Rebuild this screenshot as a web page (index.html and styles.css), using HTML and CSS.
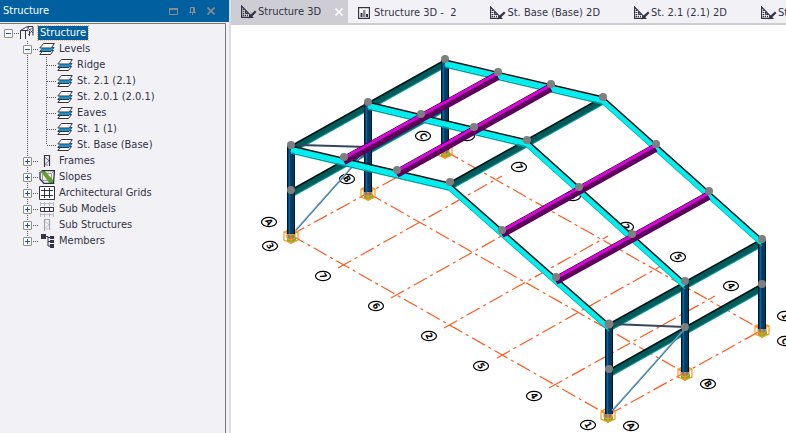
FILE: index.html
```html
<!DOCTYPE html>
<html lang="en">
<head>
<meta charset="utf-8">
<title>Structure 3D</title>
<link rel="stylesheet" href="styles.css">
</head>
<body>
<svg class="defs" aria-hidden="true">
  <defs>
    <symbol id="i-level" viewBox="0 0 16 12">
      <path d="M4 7.500h10.500l-3 4H.8z" fill="#fff" stroke="#333346"/>
      <path d="M4 4.500h11l-3 4H.8z" fill="#1c93cf" stroke="#333346"/>
      <path d="M4.500 .5h10.800l-3 4.500H.8z" fill="#fff" stroke="#333346"/>
      <path d="M2 6.800h10l2-2" fill="none" stroke="#1c93cf" stroke-width="2"/>
    </symbol>
    <symbol id="i-frame" viewBox="0 0 8 12"><path d="M1.500 12V.5h5V11" fill="none" stroke="currentColor" stroke-width="1.200"/><path d="M1.500 2l5 4M6.500 5l-5 5M3 10h2" fill="none" stroke="currentColor" stroke-opacity=".65"/></symbol>
    <symbol id="i-2d" viewBox="0 0 16 14">
      <path d="M.6 1v11.400h11L.6 1z" fill="none" stroke="#333346" stroke-width="1.200"/>
      <path d="M2.500 4v7M2 10.500h7" stroke="#333346" stroke-width="1.500" stroke-dasharray="1 1"/>
      <path d="M4.500 6v2.500h2.500z" fill="none" stroke="#333346"/>
      <path d="M7.500 13.500l1-3 5.500-5 1.500 1.500-5.500 5.500z" fill="#333346"/>
    </symbol>
    <symbol id="i-close" viewBox="0 0 8 8"><path d="M.5.5l7 7M7.500.5l-7 7" fill="none" stroke="currentColor" stroke-width="1.700"/></symbol>
  </defs>
</svg>
<div class="app">
  <aside class="panel">
    <header class="panel-head">
      <h1>Structure</h1>
      <button type="button" aria-label="Maximise"><svg width="9" height="7"><path d="M.5 1v5.500h8V1" fill="none" stroke="currentColor"/><path d="M0 1h9" stroke="currentColor" stroke-width="2"/></svg></button>
      <button type="button" aria-label="Pin"><svg width="7" height="8"><path d="M1.500 5V.5h4V5M0 5.500h7M3.500 5v3M4.500 1v4" fill="none" stroke="currentColor"/></svg></button>
      <button type="button" aria-label="Close"><svg width="8" height="8"><use href="#i-close"/></svg></button>
    </header>
    <nav class="tree" aria-label="Structure">
      <div class="row root">
        <button type="button" class="toggle open" aria-label="Collapse Structure"></button><i class="dots"></i>
        <svg class="icon-root" width="14" height="14"><path d="M.5 13V4.500l5-3M5.500 4.500V13M.5 4.500h7M5.500 1.500l2-1h5.500v9M9.500 5v5" fill="none" stroke="#333346"/><path d="M7 1l6 6M13 2L7 5M8 9l5-5M7 4l2-3" fill="none" stroke="#333346" stroke-opacity=".7"/></svg>
        <a class="label selected" href="#structure">Structure</a>
      </div>
      <ul class="branch">
        <li>
          <div class="row"><button type="button" class="toggle open" aria-label="Collapse Levels"></button><i class="dots"></i><span class="icon"><svg width="16" height="12"><use href="#i-level"/></svg></span><a class="label" href="#levels">Levels</a></div>
          <ul class="leaves">
            <li class="row"><i class="dots"></i><span class="icon"><svg width="16" height="12"><use href="#i-level"/></svg></span><a class="label" href="#ridge">Ridge</a></li>
            <li class="row"><i class="dots"></i><span class="icon"><svg width="16" height="12"><use href="#i-level"/></svg></span><a class="label" href="#l21">St. 2.1 (2.1)</a></li>
            <li class="row"><i class="dots"></i><span class="icon"><svg width="16" height="12"><use href="#i-level"/></svg></span><a class="label" href="#l201">St. 2.0.1 (2.0.1)</a></li>
            <li class="row"><i class="dots"></i><span class="icon"><svg width="16" height="12"><use href="#i-level"/></svg></span><a class="label" href="#eaves">Eaves</a></li>
            <li class="row"><i class="dots"></i><span class="icon"><svg width="16" height="12"><use href="#i-level"/></svg></span><a class="label" href="#l1">St. 1 (1)</a></li>
            <li class="row"><i class="dots"></i><span class="icon"><svg width="16" height="12"><use href="#i-level"/></svg></span><a class="label" href="#base">St. Base (Base)</a></li>
          </ul>
        </li>
        <li class="row"><button type="button" class="toggle" aria-label="Expand Frames"></button><i class="dots"></i><span class="icon"><svg width="8" height="12"><use href="#i-frame"/></svg></span><a class="label" href="#frames">Frames</a></li>
        <li class="row"><button type="button" class="toggle" aria-label="Expand Slopes"></button><i class="dots"></i><span class="icon"><svg width="16" height="14"><path d="M3.500 3.500h9v7h-9zM.5.5l3 3M15.500.5l-3 3M15.500 13.500l-3-3" fill="none" stroke="#999"/><path d="M1.500 1l4-.5 9 10-.5 3-3 .5z" fill="#5fa02e"/><path d="M2.500.5h13L14.500 13.500H5L1 9V2" fill="none" stroke="#333346" stroke-width="1.300"/></svg></span><a class="label" href="#slopes">Slopes</a></li>
        <li class="row"><button type="button" class="toggle" aria-label="Expand Architectural Grids"></button><i class="dots"></i><span class="icon"><svg width="16" height="14"><path d="M.5.5h15v13H.5z" fill="#fff" stroke="#333346"/><path d="M2 4.500h12M2 9.500h12M5.500 2v10M10.500 2v10" stroke="#333346"/></svg></span><a class="label" href="#grids">Architectural Grids</a></li>
        <li class="row"><button type="button" class="toggle" aria-label="Expand Sub Models"></button><i class="dots"></i><span class="icon"><svg width="14" height="15" fill="none"><path d="M.5 0v4M4.500 0v4M9.500 0v4M13.500 0v4M0 1.500h14M.5 11v4M4.500 11v4M9.500 11v4M13.500 11v4M0 12.500h14" stroke="#b9b9c0"/><path d="M.5 5.500h13v4H.5zM4.500 5v4M9.500 5v4" stroke="#333346"/></svg></span><a class="label" href="#models">Sub Models</a></li>
        <li class="row"><button type="button" class="toggle" aria-label="Expand Sub Structures"></button><i class="dots"></i><span class="icon faded"><svg width="8" height="12"><use href="#i-frame"/></svg></span><a class="label" href="#subs">Sub Structures</a></li>
        <li class="row"><button type="button" class="toggle" aria-label="Expand Members"></button><i class="dots"></i><span class="icon"><svg width="14" height="14"><path d="M1 0h5v5H1zM10 2h4v3h-4zM10 6h4v3h-4zM10 10h4v4h-4z" fill="#333346"/><path d="M6 2.500h2V12h2M8 3.500h2M8 7.500h2" fill="none" stroke="#333346"/></svg></span><a class="label" href="#members">Members</a></li>
      </ul>
    </nav>
  </aside>
  <main class="view">
    <div class="tabs" role="tablist">
      <div class="tab active"><button type="button" role="tab" aria-selected="true"><svg width="16" height="14"><use href="#i-2d"/></svg><span>Structure 3D</span></button><button type="button" class="close" aria-label="Close tab"><svg width="8" height="8"><use href="#i-close"/></svg></button></div>
      <div class="tab"><button type="button" role="tab"><svg width="12" height="12"><path d="M.6.6h10.800v10.800H.6z" fill="#fff" stroke="#333346" stroke-width="1.200"/><path d="M2.500 6h2v4h-2zM8 7h2v3H8z" fill="#333346"/><path d="M5 3h2.500v7H5z" fill="#85858f"/></svg><span>Structure 3D -&nbsp; 2</span></button></div>
      <div class="tab"><button type="button" role="tab"><svg width="16" height="14"><use href="#i-2d"/></svg><span>St. Base (Base) 2D</span></button></div>
      <div class="tab"><button type="button" role="tab"><svg width="16" height="14"><use href="#i-2d"/></svg><span>St. 2.1 (2.1) 2D</span></button></div>
      <div class="tab"><button type="button" role="tab"><svg width="16" height="14"><use href="#i-2d"/></svg><span>St. 2.0.1 (2.0.1) 2D</span></button></div>
    </div>
    <svg class="scene" viewBox="231 25 555 408" preserveAspectRatio="xMinYMin slice" role="img" aria-label="Portal frame model">
      <defs>
        <path id="teal-beams" d="M291 146L445 60M291 190L445 104M449 183L603 97M609 324L762 239M609 370L762 284"/>
        <path id="rafters" d="M291 146L449 183L609 324M368 102L527 140L685 282M445 60L603 97L762 239"/>
        <path id="purlins" d="M344 158L498 73M397 171L551 85M502 231L656 145M556 278L709 193"/>
        <path id="cols" d="M291 146V234M368 102V192M445 60V150M609 324V414M685 282V372M762 239V329"/>
        <g id="foot">
          <path d="M-4 5L0 8l5-3v-4h-9z" fill="#62b83a"/>
          <path d="M-4-3h8v6h-8z" fill="#7b7f83"/>
          <path d="M-7-4L0-7 7-4V4L0 7-7 4zM-7-4L0-1 7-4M0-1V7M-4-5v7M4-5v7M-4 2l4 2 4-2" fill="none" stroke="#ff9418" stroke-width="1.200"/>
        </g>
        <ellipse id="ring" rx="7.500" ry="4.700" fill="#fff" stroke="#000" stroke-width="1.200"/>
      </defs>
      <g class="axes">
        <path d="M291 235L608 415M368 193L685 373M445 151L762 330"/>
        <path d="M291 235L445 151M338 268L502 176M391 298L555 206M444 328L608 236M497 358L661 266M549 388L715 296M608 415L762 330"/>
      </g>
      <g class="marks">
        <g transform="translate(269 222)"><use href="#ring"/><text transform="rotate(60)" y="3">A</text></g>
        <g transform="translate(270 246)"><use href="#ring"/><text transform="rotate(60)" y="3">3</text></g>
        <g transform="translate(323 276)"><use href="#ring"/><text transform="rotate(60)" y="3">7</text></g>
        <g transform="translate(376 306)"><use href="#ring"/><text transform="rotate(60)" y="3">6</text></g>
        <g transform="translate(429 336)"><use href="#ring"/><text transform="rotate(60)" y="3">2</text></g>
        <g transform="translate(481 366)"><use href="#ring"/><text transform="rotate(60)" y="3">5</text></g>
        <g transform="translate(534 396)"><use href="#ring"/><text transform="rotate(60)" y="3">4</text></g>
        <g transform="translate(588 425)"><use href="#ring"/><text transform="rotate(60)" y="3">1</text></g>
        <g transform="translate(631 426)"><use href="#ring"/><text transform="rotate(60)" y="3">A</text></g>
        <g transform="translate(708 384)"><use href="#ring"/><text transform="rotate(60)" y="3">B</text></g>
        <g transform="translate(785 341)"><use href="#ring"/><text transform="rotate(60)" y="3">C</text></g>
        <g transform="translate(785 316)"><use href="#ring"/><text transform="rotate(60)" y="3">1</text></g>
        <g transform="translate(423 136)"><use href="#ring"/><text transform="rotate(60)" y="3">C</text></g>
        <g transform="translate(347 179)"><use href="#ring"/><text transform="rotate(60)" y="3">B</text></g>
        <g transform="translate(467 136)"><use href="#ring"/><text transform="rotate(60)" y="3">3</text></g>
        <g transform="translate(519 167)"><use href="#ring"/><text transform="rotate(60)" y="3">7</text></g>
        <g transform="translate(573 196)"><use href="#ring"/><text transform="rotate(60)" y="3">6</text></g>
        <g transform="translate(626 227)"><use href="#ring"/><text transform="rotate(60)" y="3">2</text></g>
        <g transform="translate(678 257)"><use href="#ring"/><text transform="rotate(60)" y="3">5</text></g>
        <g transform="translate(731 286)"><use href="#ring"/><text transform="rotate(60)" y="3">4</text></g>
      </g>
      <g>
        <use href="#foot" x="291" y="236"/><use href="#foot" x="368" y="193"/><use href="#foot" x="445" y="151"/>
        <use href="#foot" x="608" y="415"/><use href="#foot" x="685" y="373"/><use href="#foot" x="762" y="330"/>
      </g>
      <g fill="none">
        <use href="#teal-beams" y="7" stroke="#00a0a0" stroke-width="2"/>
        <use href="#teal-beams" y="3.500" stroke="#005c5c" stroke-width="6"/>
        <use href="#teal-beams" stroke="#001414" stroke-width="1.500"/>
        <use href="#cols" stroke="#001624" stroke-width="8"/>
        <use href="#cols" stroke="#003a60" stroke-width="6"/>
        <use href="#cols" x="-1.500" stroke="#0068a8" stroke-width="1.500"/>
        <path d="M300 145L368 147M612 324L685 327" stroke="#34485c" stroke-width="2"/>
        <path d="M296 230L368 149M612 411L685 329" stroke="#4a7da3" stroke-width="1.800"/>
        <path d="M296 229L368 148M612 410L685 328" stroke="#9dc3dd" stroke-width=".8"/>
        <use href="#rafters" y="7" stroke="#009c9c" stroke-width="1.500"/>
        <use href="#rafters" y="3.500" stroke="#00eeee" stroke-width="5.500"/>
        <use href="#rafters" stroke="#001414" stroke-width="1.500"/>
        <use href="#purlins" y="4" stroke="#5c005c" stroke-width="6"/>
        <use href="#purlins" stroke="#e000e0" stroke-width="3"/>
        <use href="#purlins" y="-2" stroke="#500050" stroke-width="1"/>
      </g>
      <g class="nodes">
        <circle cx="291" cy="145" r="4"/><circle cx="344" cy="157" r="4"/><circle cx="397" cy="170" r="4"/><circle cx="450" cy="182" r="4"/>
        <circle cx="502" cy="230" r="4"/><circle cx="556" cy="277" r="4"/><circle cx="609" cy="324" r="4.500"/>
        <circle cx="368" cy="102" r="4"/><circle cx="421" cy="114" r="4"/><circle cx="474" cy="127" r="4"/><circle cx="527" cy="140" r="4"/>
        <circle cx="579" cy="187" r="4"/><circle cx="632" cy="234" r="4"/><circle cx="685" cy="281" r="4"/>
        <circle cx="445" cy="59" r="4"/><circle cx="498" cy="72" r="4"/><circle cx="551" cy="84" r="4"/><circle cx="603" cy="97" r="4"/>
        <circle cx="656" cy="144" r="4"/><circle cx="709" cy="191" r="4"/><circle cx="762" cy="239" r="4"/>
        <circle cx="291" cy="190" r="4"/><circle cx="609" cy="369" r="4"/><circle cx="685" cy="327" r="4"/><circle cx="762" cy="284" r="4"/>
      </g>
    </svg>
  </main>
</div>
</body>
</html>
```

FILE: styles.css
```css
* { box-sizing: border-box; }
body {
  margin: 0;
  background: #fff;
  color: #333346;
  font: 11px/16px "DejaVu Sans Condensed", "DejaVu Sans", sans-serif;
}
button { margin: 0; padding: 0; border: 0; background: none; color: inherit; font: inherit; }
ul { margin: 0; padding: 0; list-style: none; }
a { color: inherit; text-decoration: none; }
svg { display: block; flex: none; }
.defs { position: absolute; width: 0; height: 0; }

.app { display: flex; height: 100vh; overflow: hidden; }

.panel {
  display: flex;
  flex-direction: column;
  flex: none;
  width: 231px;
  background: #f2f1f6;
  border-right: 2px solid #dcdce2;
}
.panel-head {
  display: flex;
  align-items: center;
  gap: 11px;
  height: 22px;
  padding: 0 14px 0 3px;
  background: #005f9f;
  color: #8b8a8c;
}
.panel-head h1 { flex: 1; margin: 0; color: #fff; font: inherit; }

.tree {
  flex: 1;
  margin: 1px 3px 0 0;
  padding-top: 1px;
  border-top: 1px solid #77777f;
  border-right: 1px solid #77777f;
}
.row { display: flex; align-items: center; height: 16px; white-space: nowrap; }
.root { padding-left: 4px; }
.toggle {
  flex: none;
  width: 9px;
  height: 9px;
  border: 1px solid #8f8f94;
  border-radius: 1px;
  background:
    linear-gradient(#2f5597, #2f5597) center / 5px 1px no-repeat,
    linear-gradient(#2f5597, #2f5597) center / 1px 5px no-repeat,
    #fbfbf8;
}
.toggle.open { background: linear-gradient(#2f5597, #2f5597) center / 5px 1px no-repeat, #fbfbf8; }
.dots {
  flex: none;
  width: 6px;
  height: 1px;
  margin-left: 1px;
  background: repeating-linear-gradient(90deg, #55555c 0 1px, transparent 1px 2px);
}
.icon { display: flex; justify-content: center; flex: none; width: 16px; }
.faded { color: #a5a5ac; }
.label { margin-left: 4px; }
.selected {
  padding: 0 2px;
  line-height: 14px;
  outline: 1px dotted #ffb060;
  background: #005f9f;
  color: #fff;
}
.branch {
  padding-left: 23px;
  background: repeating-linear-gradient(#55555c 0 1px, transparent 1px 2px) 27px 0 / 1px calc(100% - 8px) no-repeat;
}
.leaves {
  margin-left: 23px;
  background: repeating-linear-gradient(#55555c 0 1px, transparent 1px 2px) 0 0 / 1px calc(100% - 8px) no-repeat;
}
.leaves .dots { width: 10px; }

.view { display: flex; flex-direction: column; flex: 1; min-width: 0; }
.tabs {
  display: flex;
  flex: none;
  height: 25px;
  overflow: hidden;
  border-bottom: 2px solid #cdcdd5;
  background: #f2f1f6;
}
.tab { display: flex; align-items: center; flex: none; padding: 2px 24px 0 10px; }
.tab button { display: flex; align-items: center; gap: 1px; white-space: nowrap; }
.tab:nth-child(2) button { gap: 4px; }
.tab.active { gap: 14px; padding: 0 5px 0 10px; background: #cdcdd3; }
.tab .close { color: #fff; }

.scene { flex: 1; width: 100%; min-height: 0; background: #fff; }
.axes { fill: none; stroke: #ff5a1e; stroke-width: 1.2; stroke-dasharray: 15 4 3 4; }
.marks text { font: bold 9px "DejaVu Sans Condensed", sans-serif; text-anchor: middle; }
.nodes { fill: #7f7f7f; }
```
